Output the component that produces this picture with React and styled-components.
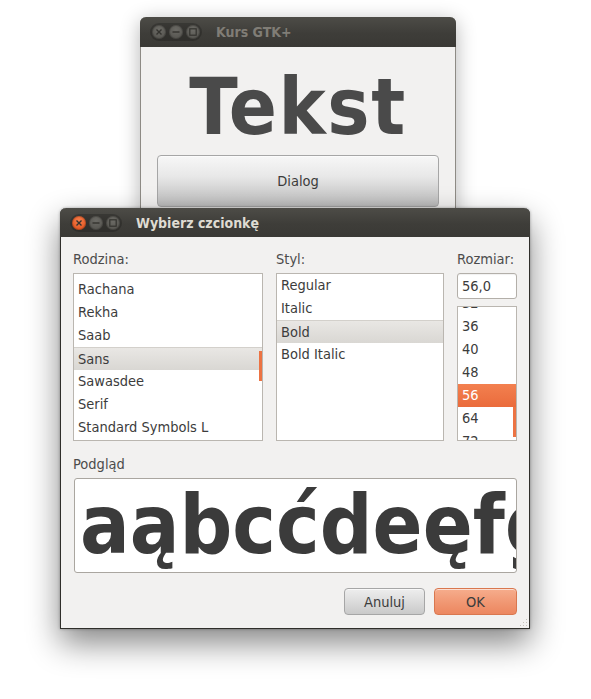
import React from "react";
import styled, { createGlobalStyle } from "styled-components";

const SANS = `"DejaVu Sans Condensed", "DejaVu Sans", sans-serif`;

const GlobalStyle = createGlobalStyle`
  html, body {
    margin: 0;
    padding: 0;
    background: #ffffff;
  }
  body {
    font-family: ${SANS};
    font-stretch: condensed;
    color: #3c3c3c;
  }
`;

const Desktop = styled.div`
  position: relative;
  width: 591px;
  height: 699px;
  overflow: hidden;
  background: #ffffff;
`;

// windows sit on a free desktop, so they are placed by coordinates
const Window = styled.div`
  position: absolute;
  left: ${(p) => p.$x}px;
  top: ${(p) => p.$y}px;
  width: ${(p) => p.$w}px;
  height: ${(p) => p.$h}px;
  box-sizing: border-box;
  display: flex;
  flex-direction: column;
  border-radius: 6px 6px 0 0;
  background: #f2f1f0;
  border: 1px solid ${(p) => (p.$active ? "#2f2e2a" : "#8e8b85")};
  border-top: none;
  box-shadow: ${(p) =>
    p.$active
      ? "0 14px 32px rgba(0,0,0,0.48), 0 0 3px rgba(0,0,0,0.35)"
      : "0 4px 20px rgba(0,0,0,0.3)"};
`;

const TitleBar = styled.div`
  height: ${(p) => p.$h}px;
  flex: none;
  display: flex;
  align-items: center;
  margin: 0 -1px;
  padding-left: ${(p) => p.$pad}px;
  border-radius: 6px 6px 0 0;
  background: linear-gradient(#4d4c47, #3e3d39 55%, #3a3935);
`;

const Controls = styled.div`
  display: flex;
  gap: 3px;
  padding: 2px;
  border-radius: 10px;
  background: rgba(0, 0, 0, 0.2);
`;

const Circle = styled.span`
  width: 14px;
  height: 14px;
  border-radius: 50%;
  display: flex;
  align-items: center;
  justify-content: center;
  background: ${(p) =>
    p.$close
      ? "radial-gradient(circle at 50% 35%, #f7814f, #e35a26 65%, #cc4a1b)"
      : "radial-gradient(circle at 50% 35%, #6b6a65, #595853 65%, #4d4c48)"};
  box-shadow: inset 0 0 0 1px rgba(0, 0, 0, 0.18);
`;

const Title = styled.span`
  margin-left: ${(p) => p.$gap}px;
  font-size: 14px;
  font-weight: bold;
  color: ${(p) => (p.$active ? "#dfdbd2" : "#807d76")};
  white-space: nowrap;
`;

const glyphColor = "#34332f";

const WindowControls = ({ active }) => (
  <Controls>
    <Circle $close={active}>
      <svg width="8" height="8" viewBox="0 0 8 8">
        <path d="M1.5 1.5 L6.5 6.5 M6.5 1.5 L1.5 6.5" stroke={glyphColor} strokeWidth="1.4" />
      </svg>
    </Circle>
    <Circle>
      <svg width="8" height="8" viewBox="0 0 8 8">
        <path d="M0.5 4 L7.5 4" stroke={glyphColor} strokeWidth="1.4" />
      </svg>
    </Circle>
    <Circle>
      <svg width="8" height="8" viewBox="0 0 8 8">
        <rect x="0.8" y="0.8" width="6.4" height="6.4" fill="none" stroke={glyphColor} strokeWidth="1.2" />
      </svg>
    </Circle>
  </Controls>
);

/* ---------- back window ---------- */

const MainBody = styled.div`
  display: flex;
  flex-direction: column;
  align-items: stretch;
  padding: 0 16px;
`;

const BigText = styled.div`
  margin-top: 20px;
  height: 80px;
  line-height: 80px;
  font-size: 79px;
  letter-spacing: 1.5px;
  font-weight: bold;
  text-align: center;
  color: #4a4a4a;
`;

const PushButton = styled.button`
  font-family: ${SANS};
  font-stretch: condensed;
  font-size: 14.5px;
  color: #3c3c3c;
  height: ${(p) => p.$h}px;
  width: ${(p) => (p.$w ? `${p.$w}px` : "auto")};
  margin-top: ${(p) => p.$mt || 0}px;
  padding: 0;
  border-radius: 4px;
  border: 1px solid ${(p) => (p.$primary ? "#d9774f" : "#a6a6a6")};
  background: ${(p) =>
    p.$primary
      ? "linear-gradient(#f6ad8d, #f09570 60%, #ec8760)"
      : p.$tall
      ? "linear-gradient(#f7f7f7, #e8e8e8 40%, #c7c7c7 85%, #b9b9b9)"
      : "linear-gradient(#eeeeee, #dcdcdc 50%, #c9c9c9)"};
  box-shadow: inset 0 1px 0 rgba(255, 255, 255, 0.6);
`;

/* ---------- font dialog ---------- */

const DialogBody = styled.div`
  flex: 1;
  display: flex;
  flex-direction: column;
  padding: 13px 11px 13px 12px;
  position: relative;
`;

const Columns = styled.div`
  display: grid;
  grid-template-columns: 190px 168px 60px;
  column-gap: 13px;
`;

const Column = styled.div`
  display: flex;
  flex-direction: column;
  gap: 5px;
`;

const Label = styled.div`
  height: 18px;
  line-height: 18px;
  font-size: 14.5px;
  color: #4c4c4c;
  margin-top: ${(p) => p.$mt || 0}px;
`;

const ListBox = styled.div`
  position: relative;
  height: ${(p) => p.$h}px;
  flex: none;
  margin-top: ${(p) => p.$mt || 0}px;
  box-sizing: border-box;
  border: 1px solid #bab6b0;
  background: #ffffff;
  overflow: hidden;
`;

const ListScroll = styled.div`
  margin-top: ${(p) => p.$offset}px;
`;

const Row = styled.div`
  height: 23px;
  padding-left: 4px;
  font-size: 14.5px;
  white-space: nowrap;
  box-sizing: border-box;
  color: ${(p) => (p.$accent ? "#ffffff" : "#3c3c3c")};
  background: ${(p) =>
    p.$accent
      ? "linear-gradient(#f3804f, #ea6b3c)"
      : p.$selected
      ? "linear-gradient(#e9e7e4, #d9d7d3)"
      : "transparent"};
  border-top: ${(p) => (p.$selected ? "1px solid #d3d0cb" : "none")};
  line-height: ${(p) => (p.$selected ? 22 : 23)}px;
`;

const ScrollIndicator = styled.div`
  position: absolute;
  right: 0;
  top: ${(p) => p.$top}px;
  width: 3px;
  height: ${(p) => p.$h}px;
  background: #ec7343;
`;

const Entry = styled.div`
  height: 26px;
  box-sizing: border-box;
  border: 1px solid #b3afa9;
  border-radius: 3px;
  background: #ffffff;
  padding-left: 4px;
  line-height: 24px;
  font-size: 14.5px;
  color: #3c3c3c;
  box-shadow: inset 0 1px 1px rgba(0, 0, 0, 0.06);
`;

const Preview = styled.div`
  margin: 5px 1px 0 1px;
  height: 95px;
  box-sizing: border-box;
  border: 1px solid #aaa6a0;
  border-radius: 3px;
  background: #ffffff;
  overflow: hidden;
  white-space: nowrap;
  padding-left: 5px;
  font-size: 82px;
  line-height: 91px;
  font-weight: bold;
  color: #3b3b3b;
`;

const ButtonRow = styled.div`
  display: flex;
  justify-content: flex-end;
  gap: 9px;
  margin-top: 15px;
  padding-right: 1px;
`;

const Grip = styled.svg`
  position: absolute;
  right: 1px;
  bottom: 1px;
`;

const families = ["Rachana", "Rekha", "Saab", "Sans", "Sawasdee", "Serif", "Standard Symbols L"];
const styles = ["Regular", "Italic", "Bold", "Bold Italic"];
const sizes = ["32", "36", "40", "48", "56", "64", "72"];

export default function App() {
  return (
    <>
      <GlobalStyle />
      <Desktop>
        <Window $x={140} $y={17} $w={316} $h={260}>
          <TitleBar $h={30} $pad={10}>
            <WindowControls active={false} />
            <Title $gap={14}>Kurs GTK+</Title>
          </TitleBar>
          <MainBody>
            <BigText>Tekst</BigText>
            <PushButton $h={52} $mt={8} $tall>
              Dialog
            </PushButton>
          </MainBody>
        </Window>

        <Window $x={60} $y={208} $w={470} $h={421} $active>
          <TitleBar $h={29} $pad={10}>
            <WindowControls active />
            <Title $gap={14} $active>
              Wybierz czcionkę
            </Title>
          </TitleBar>
          <DialogBody>
            <Columns>
              <Column>
                <Label>Rodzina:</Label>
                <ListBox $h={168}>
                  <ListScroll $offset={4}>
                    {families.map((f) => (
                      <Row key={f} $selected={f === "Sans"}>
                        {f}
                      </Row>
                    ))}
                  </ListScroll>
                  <ScrollIndicator $top={77} $h={30} />
                </ListBox>
              </Column>
              <Column>
                <Label>Styl:</Label>
                <ListBox $h={168}>
                  <ListScroll $offset={0}>
                    {styles.map((s) => (
                      <Row key={s} $selected={s === "Bold"}>
                        {s}
                      </Row>
                    ))}
                  </ListScroll>
                </ListBox>
              </Column>
              <Column>
                <Label>Rozmiar:</Label>
                <Entry>56,0</Entry>
                <ListBox $h={135} $mt={2}>
                  <ListScroll $offset={-15}>
                    {sizes.map((s) => (
                      <Row key={s} $accent={s === "56"}>
                        {s}
                      </Row>
                    ))}
                  </ListScroll>
                  <ScrollIndicator $top={100} $h={30} />
                </ListBox>
              </Column>
            </Columns>
            <Label $mt={14}>Podgląd</Label>
            <Preview>aąbcćdeęfghijklłmnńoópqrsśtuvwxyzźż</Preview>
            <ButtonRow>
              <PushButton $h={27} $w={81}>
                Anuluj
              </PushButton>
              <PushButton $h={27} $w={83} $primary>
                OK
              </PushButton>
            </ButtonRow>
            <Grip width="10" height="10" viewBox="0 0 10 10">
              {[
                [8, 2],
                [5, 5],
                [8, 5],
                [2, 8],
                [5, 8],
                [8, 8],
              ].map(([x, y]) => (
                <rect key={`${x}-${y}`} x={x} y={y} width="1" height="1" fill="#c4c0ba" />
              ))}
            </Grip>
          </DialogBody>
        </Window>
      </Desktop>
    </>
  );
}
